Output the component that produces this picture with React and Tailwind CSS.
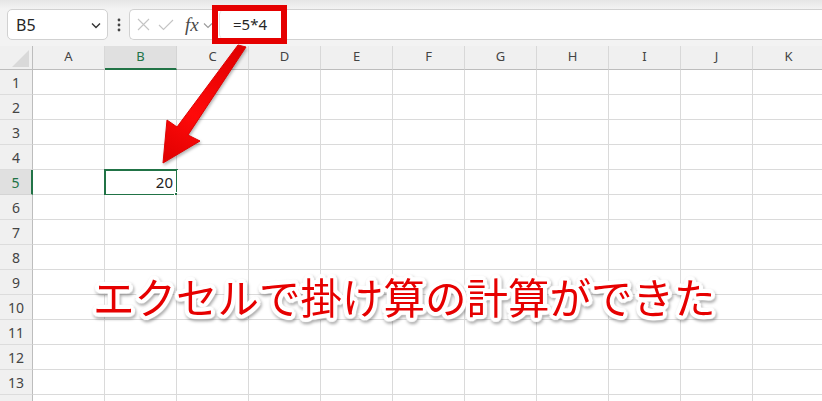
import React from "react";

const COLS = ["A", "B", "C", "D", "E", "F", "G", "H", "I", "J", "K"];
const ROWS = [1, 2, 3, 4, 5, 6, 7, 8, 9, 10, 11, 12, 13, 14];

function Toolbar() {
  return (
    <div className="flex h-[46px] items-start bg-[linear-gradient(#e6e6e6,#f3f3f3_9px,#f3f3f3)] pt-[9px]">
      <div className="ml-[7px] flex h-[31px] w-[101px] items-center justify-between rounded-[5px] border border-[#d1d1d1] bg-white pl-[8px] pr-[6px]">
        <span className="text-[16px] text-[#262626] [font-family:'Noto_Sans',sans-serif]">B5</span>
        <svg width="10" height="7" viewBox="0 0 10 7" className="mt-[1px]">
          <polyline points="1,1.5 5,5.5 9,1.5" fill="none" stroke="#333" strokeWidth="1.4" />
        </svg>
      </div>
      <div className="flex h-[31px] w-[21px] items-center justify-center">
        <svg width="4" height="14" viewBox="0 0 4 14">
          <circle cx="2" cy="2" r="1.4" fill="#444" />
          <circle cx="2" cy="7" r="1.4" fill="#444" />
          <circle cx="2" cy="12" r="1.4" fill="#444" />
        </svg>
      </div>
      <div className="flex h-[31px] flex-1 items-center rounded-l-[5px] border border-r-0 border-[#d1d1d1] bg-white">
        <div className="flex w-[89px] items-center pl-[7px]">
          <svg width="13" height="13" viewBox="0 0 13 13">
            <path d="M1 1 L12 12 M12 1 L1 12" stroke="#c4c4c4" strokeWidth="1.1" fill="none" />
          </svg>
          <svg width="16" height="12" viewBox="0 0 16 12" className="ml-[8px]">
            <polyline points="1,6 5.5,10.5 15,1" stroke="#c4c4c4" strokeWidth="1.1" fill="none" />
          </svg>
          <span className="ml-[11px] text-[19px] italic leading-none text-[#4a4a4a] [font-family:'Liberation_Serif',serif]">fx</span>
          <svg width="10" height="7" viewBox="0 0 10 7" className="ml-[4px] mt-[2px]">
            <polyline points="1,1.5 5,5.5 9,1.5" fill="none" stroke="#9a9a9a" strokeWidth="1.1" />
          </svg>
        </div>
        <div className="flex h-full flex-1 items-center rounded-l-[5px] border-l border-[#e2e2e2] pl-[13px]">
          <span className="text-[15px] text-[#262626] [font-family:'Noto_Sans',sans-serif]">=5*4</span>
        </div>
      </div>
    </div>
  );
}

function HeaderRow() {
  return (
    <div className="flex h-[24px] bg-[#f0f0f0]">
      <div className="relative w-[33px] shrink-0 border-r border-b border-[#bdbdbd]">
        <svg width="18" height="18" viewBox="0 0 18 18" className="absolute left-[12px] top-[4px]">
          <polygon points="17,0 17,17 0,17" fill="#d9d9d9" />
        </svg>
      </div>
      {COLS.map((c) => {
        const sel = c === "B";
        return (
          <div
            key={c}
            className={
              sel
                ? "flex w-[72px] shrink-0 items-center justify-center border-r border-b-2 border-r-[#d4d4d4] border-b-[#217346] bg-[#e0e0e0] pb-[1px] text-[13px] text-[#217346] [font-family:'Noto_Sans',sans-serif]"
                : "flex w-[72px] shrink-0 items-center justify-center border-r border-b border-r-[#d8d8d8] border-b-[#bdbdbd] pb-[2px] text-[13px] text-[#444] [font-family:'Noto_Sans',sans-serif]"
            }
          >
            {c}
          </div>
        );
      })}
    </div>
  );
}

function Row({ n }) {
  const sel = n === 5;
  return (
    <div className="flex h-[25px] shrink-0">
      <div
        className={
          sel
            ? "flex w-[33px] shrink-0 items-center justify-center border-r-2 border-b border-r-[#217346] border-b-[#d4d4d4] bg-[#e0e0e0] text-[14px] text-[#217346] [font-family:'Noto_Sans',sans-serif]"
            : "flex w-[33px] shrink-0 items-center justify-center border-r border-b border-r-[#bdbdbd] border-b-[#dcdcdc] bg-[#f0f0f0] text-[14px] text-[#444] [font-family:'Noto_Sans',sans-serif]"
        }
      >
        {n < 14 ? n : ""}
      </div>
      {COLS.map((c) => {
        const active = sel && c === "B";
        return (
          <div key={c} className="relative w-[72px] shrink-0 border-r border-b border-[#dadada] bg-white">
            {active && (
              <div className="absolute left-[-1px] top-[-1px] flex h-[27px] w-[74px] items-center justify-end border-2 border-[#217346] pr-[3px] text-[15px] text-[#222] [font-family:'Noto_Sans',sans-serif]">
                20
                <span className="absolute bottom-[-4px] right-[-4px] h-[6px] w-[6px] border border-white bg-[#217346]" />
              </div>
            )}
          </div>
        );
      })}
    </div>
  );
}

function Arrow() {
  return (
    <svg
      width="822"
      height="401"
      viewBox="0 0 822 401"
      className="pointer-events-none absolute left-0 top-0 [filter:drop-shadow(1px_2px_1.5px_rgba(0,0,0,0.3))]"
    >
      <defs>
        <linearGradient id="ag" x1="240" y1="46" x2="165" y2="162" gradientUnits="userSpaceOnUse">
          <stop offset="0" stopColor="#e00000" />
          <stop offset="0.6" stopColor="#ff0a0a" />
          <stop offset="1" stopColor="#e00000" />
        </linearGradient>
      </defs>
      <polygon
        points="238,45 246,47 188,135 200,141 163,163 167,120 177,127"
        fill="url(#ag)"
        stroke="#e00000"
        strokeWidth="1"
        strokeLinejoin="round"
      />
    </svg>
  );
}

const OUTLINE =
  "[text-shadow:4px_0_1px_#fff,3.7px_1.5px_1px_#fff,2.8px_2.8px_1px_#fff,1.5px_3.7px_1px_#fff,0_4px_1px_#fff,-1.5px_3.7px_1px_#fff,-2.8px_2.8px_1px_#fff,-3.7px_1.5px_1px_#fff,-4px_0_1px_#fff,-3.7px_-1.5px_1px_#fff,-2.8px_-2.8px_1px_#fff,-1.5px_-3.7px_1px_#fff,0_-4px_1px_#fff,1.5px_-3.7px_1px_#fff,2.8px_-2.8px_1px_#fff,3.7px_-1.5px_1px_#fff,2px_2px_0_#fff,-2px_-2px_0_#fff,2px_-2px_0_#fff,-2px_2px_0_#fff]";

export default function App() {
  return (
    <div className="relative h-[401px] w-[822px] overflow-hidden bg-white">
      <Toolbar />
      <div className="flex flex-col">
        <HeaderRow />
        {ROWS.map((n) => (
          <Row key={n} n={n} />
        ))}
      </div>
      <div className="pointer-events-none absolute left-[212px] top-[5px] h-[39px] w-[75px] border-[6px] border-[#e50000]" />
      <Arrow />
      <div
        className={
          "pointer-events-none absolute left-[93px] top-[276px] whitespace-nowrap text-[41.5px] font-normal leading-none text-[#e60000] [filter:drop-shadow(1.5px_2px_1.5px_rgba(0,0,0,0.35))] [font-family:'Noto_Sans_CJK_JP',sans-serif] " +
          OUTLINE
        }
      >
        エクセルで掛け算の計算ができた
      </div>
    </div>
  );
}
